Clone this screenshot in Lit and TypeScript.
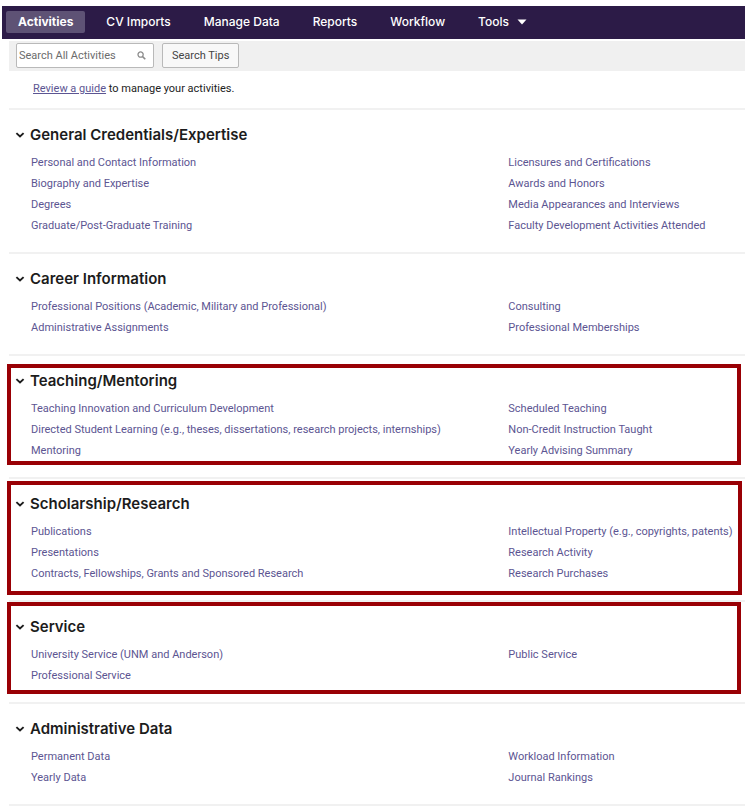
import { LitElement, html, css, svg, nothing } from "lit";
import { customElement, property, state } from "lit/decorators.js";
import { classMap } from "lit/directives/class-map.js";

interface Section {
  title: string;
  left: string[];
  right: string[];
  outline?: "inner" | "tall" | "flush";
}

const NAV = ["Activities", "CV Imports", "Manage Data", "Reports", "Workflow"];

const SECTIONS: Section[] = [
  {
    title: "General Credentials/Expertise",
    left: [
      "Personal and Contact Information",
      "Biography and Expertise",
      "Degrees",
      "Graduate/Post-Graduate Training",
    ],
    right: [
      "Licensures and Certifications",
      "Awards and Honors",
      "Media Appearances and Interviews",
      "Faculty Development Activities Attended",
    ],
  },
  {
    title: "Career Information",
    left: [
      "Professional Positions (Academic, Military and Professional)",
      "Administrative Assignments",
    ],
    right: ["Consulting", "Professional Memberships"],
  },
  {
    title: "Teaching/Mentoring",
    left: [
      "Teaching Innovation and Curriculum Development",
      "Directed Student Learning (e.g., theses, dissertations, research projects, internships)",
      "Mentoring",
    ],
    right: [
      "Scheduled Teaching",
      "Non-Credit Instruction Taught",
      "Yearly Advising Summary",
    ],
    outline: "inner",
  },
  {
    title: "Scholarship/Research",
    left: [
      "Publications",
      "Presentations",
      "Contracts, Fellowships, Grants and Sponsored Research",
    ],
    right: [
      "Intellectual Property (e.g., copyrights, patents)",
      "Research Activity",
      "Research Purchases",
    ],
    outline: "tall",
  },
  {
    title: "Service",
    left: ["University Service (UNM and Anderson)", "Professional Service"],
    right: ["Public Service"],
    outline: "flush",
  },
  {
    title: "Administrative Data",
    left: ["Permanent Data", "Yearly Data"],
    right: ["Workload Information", "Journal Rankings"],
  },
];

@customElement("activity-section")
export class ActivitySection extends LitElement {
  @property({ attribute: false }) section!: Section;
  @state() private open = true;

  static styles = css`
    :host {
      display: block;
      position: relative;
      border-top: 2px solid #f1f1f1;
      padding: 14px 0 16px;
    }
    .title {
      margin: 0 0 6px;
      font-family: Inter, "Liberation Sans", sans-serif;
      font-size: 15px;
      line-height: 22px;
      font-weight: 600;
    }
    .toggle {
      display: flex;
      align-items: center;
      gap: 5px;
      padding: 0 0 0 6px;
      border: 0;
      background: none;
      font: inherit;
      color: #1c1c1c;
      cursor: pointer;
    }
    .chevron {
      width: 10px;
      height: 10px;
    }
    .closed .chevron {
      transform: rotate(-90deg);
    }
    .columns {
      display: grid;
      grid-template-columns: 2fr 1fr;
      column-gap: 4px;
      padding-left: 22px;
    }
    .list {
      list-style: none;
      margin: 0;
      padding: 0;
      min-width: 0;
    }
    .item {
      font-size: 11px;
      line-height: 21px;
      white-space: nowrap;
    }
    .link {
      color: #5c5592;
      text-decoration: none;
    }
    .link:hover {
      text-decoration: underline;
    }
    .outline {
      position: absolute;
      border: 4px solid #990005;
      pointer-events: none;
    }
    .inner {
      inset: 8px 4px 12px -2px;
    }
    .tall {
      inset: 2px 3px 5px -2px;
    }
    .flush {
      inset: 0 4px 8px -2px;
    }
  `;

  private list(items: string[]) {
    return html`<ul class="list">
      ${items.map(
        (t) => html`<li class="item"><a class="link" href="#">${t}</a></li>`
      )}
    </ul>`;
  }

  render() {
    const s = this.section;
    return html`
      <h2 class="title ${classMap({ closed: !this.open })}">
        <button
          class="toggle"
          aria-expanded=${this.open}
          @click=${() => (this.open = !this.open)}
        >
          <svg class="chevron" viewBox="0 0 10 10" aria-hidden="true">
            <path
              d="M1.4 3.1 5 6.5 8.6 3.1"
              fill="none"
              stroke="currentColor"
              stroke-width="1.9"
            />
          </svg>
          ${s.title}
        </button>
      </h2>
      ${this.open
        ? html`<div class="columns">
            ${this.list(s.left)}${this.list(s.right)}
          </div>`
        : nothing}
      ${s.outline
        ? html`<div class="outline ${s.outline}"></div>`
        : nothing}
    `;
  }
}

@customElement("app-root")
export class AppRoot extends LitElement {
  static styles = css`
    :host {
      display: block;
      padding: 6px 5px 0 2px;
      background: #fff;
      color: #222;
      font-family: Roboto, "Liberation Sans", sans-serif;
      font-size: 11px;
    }
    .nav {
      display: flex;
      align-items: center;
      gap: 9px;
      padding: 5px 4px 6px;
      background: #2c1b47;
    }
    .tab {
      display: flex;
      align-items: center;
      gap: 8px;
      padding: 0 12px;
      border: 0;
      border-radius: 2px;
      background: none;
      color: #fff;
      font: 500 12px/22px Inter, "Liberation Sans", sans-serif;
      text-decoration: none;
      white-space: nowrap;
      cursor: pointer;
    }
    .active {
      background: #5e5275;
      font-weight: 700;
    }
    .caret {
      width: 10px;
      height: 6px;
    }
    .body {
      margin-left: 7px;
    }
    .tools {
      display: flex;
      gap: 8px;
      margin-top: 2px;
      padding: 2px 7px 3px;
      background: #f0f0f0;
    }
    .search {
      display: flex;
      align-items: center;
      box-sizing: border-box;
      width: 138px;
      height: 25px;
      padding: 0 7px 0 2px;
      border: 1px solid #b9b9b9;
      border-radius: 2px;
      background: #fff;
    }
    .field {
      flex: 1;
      min-width: 0;
      padding: 0;
      border: 0;
      outline: 0;
      background: none;
      font: 11px/20px Roboto, "Liberation Sans", sans-serif;
      color: #333;
    }
    .field::placeholder {
      color: #6c6c6c;
      opacity: 1;
    }
    .lens {
      width: 9px;
      height: 9px;
      color: #8c8c8c;
    }
    .tips {
      box-sizing: border-box;
      height: 25px;
      padding: 0 9px;
      border: 1px solid #b9b9b9;
      border-radius: 2px;
      background: #f8f8f8;
      color: #444;
      font: 11px/20px Roboto, "Liberation Sans", sans-serif;
      cursor: pointer;
    }
    .guide {
      margin: 0;
      padding: 8px 24px 9px;
      line-height: 20px;
    }
    .guide-link {
      color: #5c5592;
    }
    .end {
      height: 2px;
      margin: 0;
      border: 0;
      background: #f1f1f1;
    }
  `;

  render() {
    return html`
      <nav class="nav" aria-label="Main">
        ${NAV.map(
          (label, i) =>
            html`<a class="tab ${classMap({ active: i === 0 })}" href="#"
              >${label}</a
            >`
        )}
        <button class="tab" aria-haspopup="true">
          Tools
          <svg class="caret" viewBox="0 0 10 6" aria-hidden="true">
            ${svg`<path d="M0.5 0.5h9L5 5.5z" fill="currentColor"/>`}
          </svg>
        </button>
      </nav>
      <main class="body">
        <div class="tools">
          <label class="search">
            <input
              class="field"
              type="text"
              aria-label="Search All Activities"
              placeholder="Search All Activities"
            />
            <svg class="lens" viewBox="0 0 10 10" aria-hidden="true">
              <circle
                cx="4"
                cy="4"
                r="2.9"
                fill="none"
                stroke="currentColor"
                stroke-width="1.4"
              />
              <path
                d="M6.2 6.2 9.2 9.2"
                stroke="currentColor"
                stroke-width="1.8"
              />
            </svg>
          </label>
          <button class="tips">Search Tips</button>
        </div>
        <p class="guide">
          <a class="guide-link" href="#">Review a guide</a> to manage your
          activities.
        </p>
        ${SECTIONS.map(
          (s) => html`<activity-section .section=${s}></activity-section>`
        )}
        <hr class="end" />
      </main>
    `;
  }
}
